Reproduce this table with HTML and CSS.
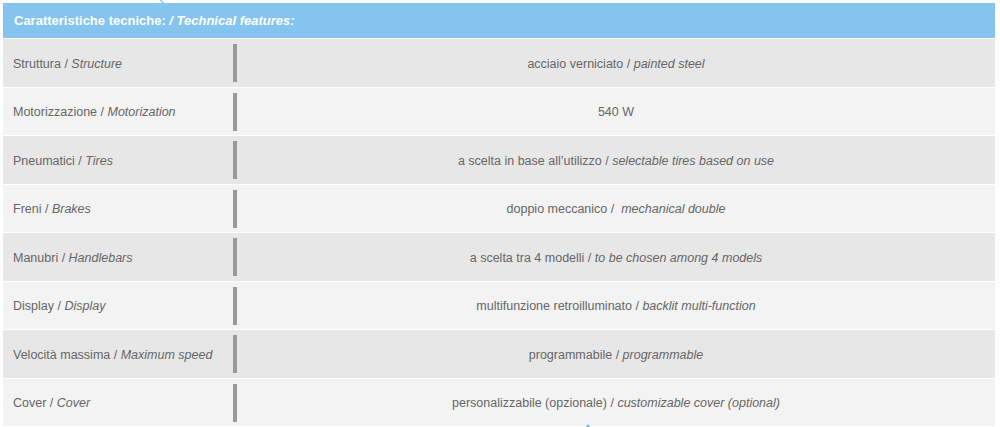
FILE: index.html
```html
<!DOCTYPE html>
<html>
<head>
<meta charset="utf-8">
<link rel="stylesheet" href="styles.css">
</head>
<body>
<div class="page">
  <svg class="deco deco-top" width="12" height="5" viewBox="0 0 12 5"><path d="M2 0 L7 4" stroke="#8ec9ef" stroke-width="1.4" fill="none"/></svg>
  <div class="specs">
    <div class="head">Caratteristiche tecniche:&nbsp;<em>/ Technical features:</em></div>
    <div class="row odd"><div class="label">Struttura / <em>Structure</em></div><div class="bar"></div><div class="value">acciaio verniciato / <em>painted steel</em></div></div>
    <div class="row even"><div class="label">Motorizzazione / <em>Motorization</em></div><div class="bar"></div><div class="value">540 W</div></div>
    <div class="row odd"><div class="label">Pneumatici / <em>Tires</em></div><div class="bar"></div><div class="value">a scelta in base all’utilizzo / <em>selectable tires based on use</em></div></div>
    <div class="row even"><div class="label">Freni / <em>Brakes</em></div><div class="bar"></div><div class="value">doppio meccanico / &nbsp;<em>mechanical double</em></div></div>
    <div class="row odd"><div class="label">Manubri / <em>Handlebars</em></div><div class="bar"></div><div class="value">a scelta tra 4 modelli / <em>to be chosen among 4 models</em></div></div>
    <div class="row even"><div class="label">Display / <em>Display</em></div><div class="bar"></div><div class="value">multifunzione retroilluminato / <em>backlit multi-function</em></div></div>
    <div class="row odd"><div class="label">Velocità massima / <em>Maximum speed</em></div><div class="bar"></div><div class="value">programmabile / <em>programmable</em></div></div>
    <div class="row even"><div class="label">Cover / <em>Cover</em></div><div class="bar"></div><div class="value">personalizzabile (opzionale) / <em>customizable cover (optional)</em></div></div>
  </div>
  <svg class="deco deco-bottom" width="6" height="4" viewBox="0 0 6 4"><circle cx="3" cy="3" r="1.6" fill="#6fb8ea"/></svg>
</div>
</body>
</html>
```
FILE: styles.css
```css
html, body {
  margin: 0;
  padding: 0;
  background: #ffffff;
}
body {
  font-family: "Liberation Sans", Arial, sans-serif;
  font-size: 12.5px;
  color: #666666;
}
.page {
  position: relative;
  width: 1000px;
  height: 427px;
  overflow: hidden;
  padding: 3px 0 0 3px;
  box-sizing: border-box;
}
.specs {
  width: 992px;
  display: flex;
  flex-direction: column;
  gap: 1px;
}
.head {
  height: 35px;
  background: #85c4ee;
  color: #ffffff;
  font-weight: bold;
  font-size: 13px;
  display: flex;
  align-items: center;
  padding-left: 11px;
  box-sizing: border-box;
}
.row {
  height: 47.5px;
  display: flex;
  align-items: center;
}
.odd { background: #e7e7e7; }
.even { background: #f3f3f3; }
.label {
  width: 230px;
  padding-left: 10px;
  padding-top: 2px;
  box-sizing: border-box;
  white-space: nowrap;
}
.bar {
  width: 4px;
  height: 38px;
  background: #999999;
  margin-top: 1px;
}
.value {
  flex: 1;
  text-align: center;
  white-space: nowrap;
  padding-top: 2px;
}
em { font-style: italic; }
.deco {
  position: absolute;
  display: block;
}
.deco-top { left: 158px; top: 0; }
.deco-bottom { left: 585px; top: 423px; }
```
